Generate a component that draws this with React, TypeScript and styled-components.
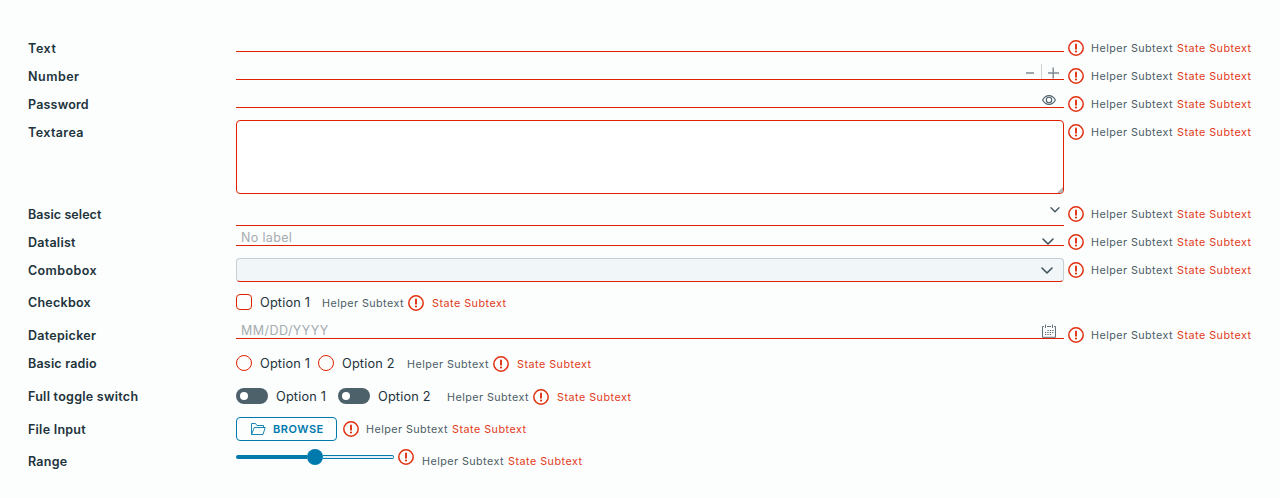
import React from "react";
import styled, { createGlobalStyle } from "styled-components";

const red = "#e02200";
const blue = "#0079ad";

const GlobalStyle = createGlobalStyle`
  * { box-sizing: border-box; }
  body { margin: 0; background: #fcfdfd; font-family: Inter, "Liberation Sans", sans-serif; }
`;

const Form = styled.form`
  display: flex;
  flex-direction: column;
  width: 1280px;
  height: 498px;
  padding: 34px 0 0 28px;
  background: #fcfdfd;
  overflow: hidden;
`;

const Row = styled.div<{ $h?: number }>`
  display: flex;
  align-items: flex-start;
  flex: none;
  height: ${(p) => p.$h ?? 28}px;
`;

const Label = styled.label<{ $ls?: number }>`
  width: 208px;
  flex: none;
  font-size: 12.5px;
  font-weight: 600;
  line-height: 29px;
  height: 28px;
  letter-spacing: ${(p) => p.$ls ?? 0.25}px;
  color: #21333b;
  white-space: nowrap;
`;

const Field = styled.div<{ $h?: number }>`
  display: flex;
  flex: none;
  justify-content: space-between;
  align-items: flex-start;
  width: 828px;
  height: ${(p) => p.$h ?? 18}px;
  border-bottom: 1px solid ${red};
`;

const Area = styled.textarea`
  flex: none;
  width: 828px;
  height: 74px;
  margin: 2px 0 0;
  border: 1px solid ${red};
  border-radius: 4px;
  background: #fff;
  resize: none;
`;

const Grip = styled.svg`
  flex: none;
  width: 6px;
  height: 6px;
  margin: 69px 1px 0 -7px;
`;

const Combo = styled.div`
  display: flex;
  flex: none;
  justify-content: flex-end;
  width: 828px;
  height: 24px;
  margin-top: 2px;
  padding: 8px 10px 0 0;
  border: 1px solid #c5d0d6;
  border-bottom-color: ${red};
  border-radius: 4px;
  background: #f1f6f8;
`;

const Placeholder = styled.span<{ $ls?: number }>`
  padding-left: 5px;
  font-size: 12.5px;
  line-height: 19px;
  letter-spacing: ${(p) => p.$ls ?? 0.35}px;
  color: #a5acb0;
`;

const Push = styled.span<{ $top: number; $right: number }>`
  display: flex;
  height: 0;
  margin: ${(p) => p.$top}px ${(p) => p.$right}px 0 auto;
`;

const Stepper = styled.div`
  display: flex;
  margin: 2px 5px 0 auto;
  height: 15px;
`;

const Divider = styled.span`
  width: 1px;
  height: 15px;
  margin: 0 6px;
  background: #cbd2d5;
`;

const ErrorIcon = styled.svg<{ $top?: number; $ml?: number }>`
  flex: none;
  width: 16px;
  height: 16px;
  margin: ${(p) => p.$top ?? 6}px 0 0 ${(p) => p.$ml ?? 4}px;
`;

const Sub = styled.span<{ $ml: number; $state?: boolean; $top?: number }>`
  flex: none;
  width: ${(p) => (p.$state ? 76 : 83)}px;
  margin: ${(p) => p.$top ?? 0}px 0 0 ${(p) => p.$ml}px;
  font-size: 10.75px;
  line-height: 30px;
  height: 28px;
  letter-spacing: ${(p) => (p.$state ? 0.5 : 0.45)}px;
  color: ${(p) => (p.$state ? "#e03a20" : "#4b5c65")};
  white-space: nowrap;
`;

const Option = styled.span<{ $w: number }>`
  width: ${(p) => p.$w}px;
  flex: none;
  margin-left: 8px;
  font-size: 12.75px;
  line-height: 30px;
  height: 28px;
  letter-spacing: 0.15px;
  color: #21333b;
  white-space: nowrap;
`;

const Choice = styled.span<{ $round?: boolean }>`
  flex: none;
  width: 16px;
  height: 16px;
  margin-top: 6px;
  border: 1px solid ${red};
  border-radius: ${(p) => (p.$round ? "50%" : "4px")};
`;

const Toggle = styled.span`
  display: flex;
  align-items: center;
  flex: none;
  width: 32px;
  height: 16px;
  margin-top: 6px;
  padding-left: 4px;
  border-radius: 8px;
  background: #4d616b;
  &::before {
    content: "";
    width: 8px;
    height: 8px;
    border-radius: 50%;
    background: #fff;
  }
`;

const Browse = styled.button`
  display: flex;
  align-items: center;
  width: 101px;
  height: 24px;
  margin: 2px 2px 0 0;
  padding: 0 0 0 13px;
  gap: 7px;
  border: 1px solid ${blue};
  border-radius: 4px;
  background: transparent;
  font: 600 11px Inter, sans-serif;
  letter-spacing: 0.5px;
  color: ${blue};
  white-space: nowrap;
`;

const Slider = styled.div`
  display: flex;
  align-items: center;
  width: 158px;
  height: 16px;
  margin-top: 2px;
`;

const Filled = styled.span`
  width: 71px;
  height: 4px;
  border-radius: 2px 0 0 2px;
  background: ${blue};
`;

const Thumb = styled.span`
  width: 16px;
  height: 16px;
  border-radius: 50%;
  background: ${blue};
`;

const Rest = styled.span`
  flex: 1;
  height: 4px;
  border: 1px solid ${blue};
  border-left: 0;
  border-radius: 0 2px 2px 0;
  background: #e3eff4;
`;

const Alert = ({ top, ml }: { top?: number; ml?: number }) => (
  <ErrorIcon $top={top} $ml={ml} viewBox="0 0 16 16" fill="none" stroke="#e0300f">
    <circle cx="8" cy="8" r="7.2" strokeWidth="1.5" />
    <path d="M8 4.5v4.2" strokeWidth="1.9" strokeLinecap="round" />
    <circle cx="8" cy="11.5" r="1.1" fill="#e0300f" stroke="none" />
  </ErrorIcon>
);

const Chevron = ({ w }: { w: number }) => (
  <svg width={w} height={w === 12 ? 7 : 6} viewBox={w === 12 ? "0 0 12 7" : "0 0 10 6"} fill="none" stroke="#40535d" strokeLinecap="round" strokeLinejoin="round">
    {w === 12 ? <path d="M1 1l5 5 5-5" strokeWidth="1.6" /> : <path d="M1 .8l4 4 4-4" strokeWidth="1.3" />}
  </svg>
);

const Messages = ({ ml = 7, iconTop }: { ml?: number; iconTop?: number }) => (
  <>
    <Alert top={iconTop} />
    <Sub $ml={ml}>Helper Subtext</Sub>
    <Sub $ml={3} $state>State Subtext</Sub>
  </>
);

const InlineMessages = ({ ml }: { ml: number }) => (
  <>
    <Sub $ml={ml} $top={1}>Helper Subtext</Sub>
    <Alert top={7} ml={3} />
    <Sub $ml={8} $top={1} $state>State Subtext</Sub>
  </>
);

export default function App() {
  return (
    <>
      <GlobalStyle />
      <Form>
        <Row><Label $ls={0.6}>Text</Label><Field /><Messages /></Row>
        <Row>
          <Label $ls={0.5}>Number</Label>
          <Field>
            <Stepper>
              <svg width="10" height="15" stroke="#7d8a91" strokeWidth="1.5"><path d="M1 9h8" /></svg>
              <Divider />
              <svg width="11" height="15" stroke="#7d8a91" strokeWidth="1.4"><path d="M0 9h11M5.2 3.5v11" /></svg>
            </Stepper>
          </Field>
          <Messages />
        </Row>
        <Row>
          <Label $ls={0.2}>Password</Label>
          <Field>
            <Push $top={5} $right={8}>
              <svg width="14" height="10" viewBox="0 0 14 10" fill="none" stroke="#4d616b" strokeWidth="1.1">
                <path d="M.6 5C2.2 2 4.4.6 7 .6S11.8 2 13.4 5C11.8 8 9.6 9.4 7 9.4S2.2 8 .6 5z" />
                <circle cx="7" cy="5" r="2.7" />
              </svg>
            </Push>
          </Field>
          <Messages />
        </Row>
        <Row $h={82}>
          <Label $ls={0.4}>Textarea</Label>
          <Area />
          <Grip viewBox="0 0 6 6" fill="#b5b5b5"><path d="M0 6L6 0v4L4 6z" /></Grip>
          <Messages />
        </Row>
        <Row>
          <Label $ls={0.07}>Basic select</Label>
          <Field $h={26}><Push $top={7} $right={4}><Chevron w={10} /></Push></Field>
          <Messages />
        </Row>
        <Row>
          <Label $ls={0.25}>Datalist</Label>
          <Field><Placeholder>No label</Placeholder><Push $top={10} $right={10}><Chevron w={12} /></Push></Field>
          <Messages />
        </Row>
        <Row $h={32}><Label $ls={0.4}>Combobox</Label><Combo><Chevron w={12} /></Combo><Messages /></Row>
        <Row $h={33}>
          <Label>Checkbox</Label>
          <Choice /><Option $w={51}>Option 1</Option>
          <InlineMessages ml={11} />
        </Row>
        <Row>
          <Label $ls={0.27}>Datepicker</Label>
          <Field>
            <Placeholder $ls={0.45}>MM/DD/YYYY</Placeholder>
            <Push $top={3} $right={8}>
              <svg width="14" height="14" viewBox="0 0 14 14" fill="none" stroke="#4d616b">
                <path d="M2 2.5H.5v10.8h13V2.5H12M5 2.5h4M3.5 .5v3.5M10.5 .5v3.5" strokeWidth=".9" />
                <path d="M5.5 6.5h6M3 8.5h8.5M3 10.5h6" strokeWidth="1" strokeDasharray="1.2 1.2" />
              </svg>
            </Push>
          </Field>
          <Messages />
        </Row>
        <Row $h={33}>
          <Label $ls={0.2}>Basic radio</Label>
          <Choice $round /><Option $w={58}>Option 1</Option>
          <Choice $round /><Option $w={54}>Option 2</Option>
          <InlineMessages ml={11} />
        </Row>
        <Row $h={33}>
          <Label $ls={0.27}>Full toggle switch</Label>
          <Toggle /><Option $w={62}>Option 1</Option>
          <Toggle /><Option $w={54}>Option 2</Option>
          <InlineMessages ml={15} />
        </Row>
        <Row $h={32}>
          <Label>File Input</Label>
          <Browse type="button">
            <svg width="16" height="14" viewBox="0 0 16 14" fill="none" stroke={blue} strokeWidth=".9" strokeLinejoin="round">
              <path d="M1.5 12.5V1.5h4l1.4 2h6.6v2M1.5 12.5l2.7-7h11l-2.2 7z" />
            </svg>
            BROWSE
          </Browse>
          <Messages />
        </Row>
        <Row>
          <Label>Range</Label>
          <Slider><Filled /><Thumb /><Rest /></Slider>
          <Messages ml={8} iconTop={2} />
        </Row>
      </Form>
    </>
  );
}
